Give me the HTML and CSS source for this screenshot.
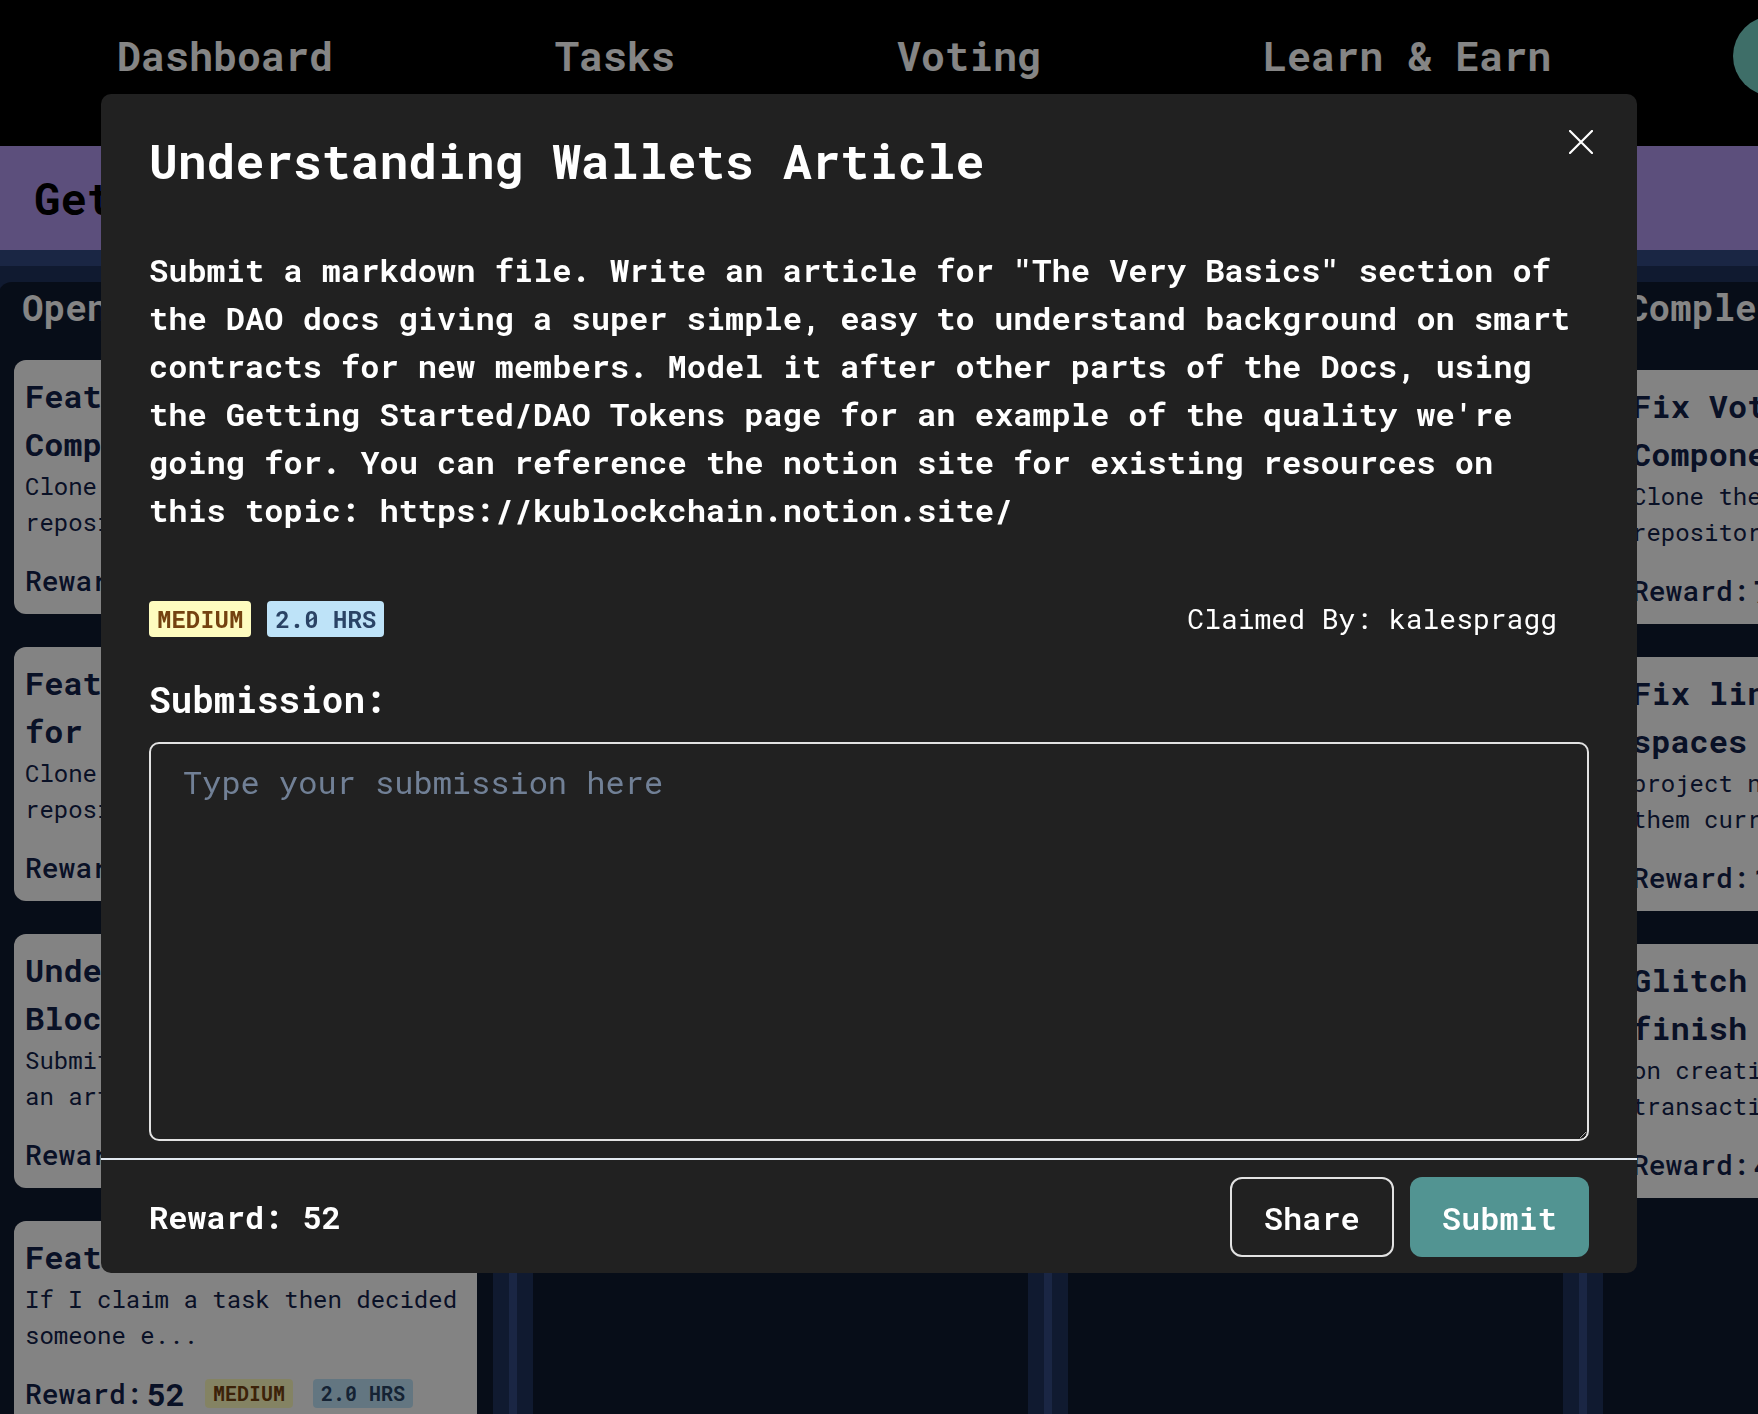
FILE: index.html
```html
<!DOCTYPE html>
<html lang="en">
<head>
<meta charset="utf-8">
<title>Tasks</title>
<link rel="stylesheet" href="styles.css">
</head>
<body>
<header class="topnav">
  <ul class="nav-links">
    <li>Dashboard</li>
    <li>Tasks</li>
    <li>Voting</li>
    <li>Learn &amp; Earn</li>
  </ul>
  <div class="avatar"></div>
</header>

<section class="banner">
  <h1>Get Involved</h1>
</section>

<main class="board">
  <section class="column">
    <div class="column-inner">
      <h2>Open</h2>
      <div class="cards">
        <article class="card">
          <h3 class="card-title">Feature: Proposal Component</h3>
          <p class="card-desc">Clone the DAO dashboard repository and c...</p>
          <div class="card-meta"><span class="reward-label">Reward:</span><span class="reward-value">60</span><span class="badge badge-yellow badge-sm">MEDIUM</span><span class="badge badge-blue badge-sm">3.0 HRS</span></div>
        </article>
        <article class="card">
          <h3 class="card-title">Feature: Add Dark Mode for Tasks</h3>
          <p class="card-desc">Clone the DAO frontend repository and ad...</p>
          <div class="card-meta"><span class="reward-label">Reward:</span><span class="reward-value">40</span><span class="badge badge-yellow badge-sm">MEDIUM</span><span class="badge badge-blue badge-sm">2.0 HRS</span></div>
        </article>
        <article class="card">
          <h3 class="card-title">Understanding Blockchain Article</h3>
          <p class="card-desc">Submit a markdown file. Write an article...</p>
          <div class="card-meta"><span class="reward-label">Reward:</span><span class="reward-value">52</span><span class="badge badge-yellow badge-sm">MEDIUM</span><span class="badge badge-blue badge-sm">2.0 HRS</span></div>
        </article>
        <article class="card">
          <h3 class="card-title">Feature: Unclaim Task</h3>
          <p class="card-desc">If I claim a task then decided someone e...</p>
          <div class="card-meta"><span class="reward-label">Reward:</span><span class="reward-value">52</span><span class="badge badge-yellow badge-sm">MEDIUM</span><span class="badge badge-blue badge-sm">2.0 HRS</span></div>
        </article>
      </div>
    </div>
  </section>

  <section class="column">
    <div class="column-inner">
      <h2>In Progress</h2>
      <div class="cards">
        <article class="card">
          <h3 class="card-title">Understanding Wallets Article</h3>
          <p class="card-desc">Submit a markdown file. Write an article...</p>
          <div class="card-meta"><span class="reward-label">Reward:</span><span class="reward-value">52</span><span class="badge badge-yellow badge-sm">MEDIUM</span><span class="badge badge-blue badge-sm">2.0 HRS</span></div>
        </article>
        <article class="card">
          <h3 class="card-title">Fix Task Modal Scrolling</h3>
          <p class="card-desc">Long task descriptions overflow the moda...</p>
          <div class="card-meta"><span class="reward-label">Reward:</span><span class="reward-value">20</span><span class="badge badge-yellow badge-sm">MEDIUM</span><span class="badge badge-blue badge-sm">1.0 HRS</span></div>
        </article>
      </div>
    </div>
  </section>

  <section class="column">
    <div class="column-inner">
      <h2>In Review</h2>
      <div class="cards">
        <article class="card">
          <h3 class="card-title">Feature: Voting Results Chart</h3>
          <p class="card-desc">Clone the DAO dashboard repository and a...</p>
          <div class="card-meta"><span class="reward-label">Reward:</span><span class="reward-value">64</span><span class="badge badge-yellow badge-sm">MEDIUM</span><span class="badge badge-blue badge-sm">4.0 HRS</span></div>
        </article>
      </div>
    </div>
  </section>

  <section class="column column-done">
    <div class="column-inner">
      <h2>Completed</h2>
      <div class="cards">
        <article class="card">
          <h3 class="card-title">Fix Voting Proposal Component</h3>
          <p class="card-desc">Clone the DAO voting repository and fix...</p>
          <div class="card-meta"><span class="reward-label">Reward:</span><span class="reward-value">75</span><span class="badge badge-yellow badge-sm">MEDIUM</span><span class="badge badge-blue badge-sm">3.0 HRS</span></div>
        </article>
        <article class="card">
          <h3 class="card-title">Fix line breaks and spaces in descriptions</h3>
          <p class="card-desc">project names with spaces make them curr...</p>
          <div class="card-meta"><span class="reward-label">Reward:</span><span class="reward-value">15</span><span class="badge badge-yellow badge-sm">EASY</span><span class="badge badge-blue badge-sm">1.0 HRS</span></div>
        </article>
        <article class="card">
          <h3 class="card-title">Glitch when tasks finish loading</h3>
          <p class="card-desc">on creating a new task the transaction s...</p>
          <div class="card-meta"><span class="reward-label">Reward:</span><span class="reward-value">40</span><span class="badge badge-yellow badge-sm">MEDIUM</span><span class="badge badge-blue badge-sm">2.0 HRS</span></div>
        </article>
      </div>
    </div>
  </section>
</main>

<div class="overlay"></div>

<div class="modal-layer">
  <div class="modal" role="dialog" aria-labelledby="modal-title">
    <h2 class="modal-header" id="modal-title">Understanding Wallets Article</h2>
    <button class="close-btn" aria-label="Close">
      <svg width="24" height="24" viewBox="0 0 24 24" aria-hidden="true">
        <path d="M1 1 L23 23 M23 1 L1 23" stroke="#ffffff" stroke-width="2.2" stroke-linecap="round" fill="none"/>
      </svg>
    </button>
    <div class="modal-body">
      <p class="modal-desc">Submit a markdown file. Write an article for "The Very Basics" section of the DAO docs giving a super simple, easy to understand background on smart contracts for new members. Model it after other parts of the Docs, using the Getting Started/DAO Tokens page for an example of the quality we're going for. You can reference the notion site for existing resources on this topic: https://kublockchain.notion.site/</p>
      <div class="meta-row">
        <span class="badge badge-yellow">MEDIUM</span>
        <span class="badge badge-blue">2.0 HRS</span>
        <span class="claimed">Claimed By: kalespragg</span>
      </div>
      <label class="submission-label" for="submission">Submission:</label>
      <textarea class="submission" id="submission" placeholder="Type your submission here"></textarea>
    </div>
    <div class="modal-footer">
      <p class="footer-reward">Reward: 52</p>
      <button class="btn btn-outline">Share</button>
      <button class="btn btn-primary">Submit</button>
    </div>
  </div>
</div>
</body>
</html>
```

FILE: styles.css
```css
* {
  box-sizing: border-box;
}

body {
  margin: 0;
  height: 1414px;
  overflow: hidden;
  background: #000;
  font-family: "Roboto Mono", "DejaVu Sans Mono", "Liberation Mono", monospace;
}

/* ---------- top navigation ---------- */
.topnav {
  height: 112px;
  margin-bottom: 34px;
  display: flex;
  align-items: center;
  padding-left: 117px;
}

.nav-links {
  flex: none;
  display: flex;
  gap: 222px;
  margin: 0;
  padding: 0;
  list-style: none;
  font-size: 40px;
  line-height: 60px;
  font-weight: 700;
  color: #ffffff;
}

.avatar {
  flex: none;
  width: 80px;
  height: 80px;
  margin-left: 182px;
  border-radius: 50%;
  background: #77d3c8;
}

/* ---------- banner ---------- */
.banner {
  height: 104px;
  display: flex;
  align-items: center;
  padding-left: 34px;
  background: #b198ee;
}

.banner h1 {
  margin: 0;
  font-size: 44px;
  font-weight: 700;
  color: #000;
}

/* ---------- board ---------- */
.board {
  display: flex;
  gap: 8px;
  margin-left: -18px;
  padding-top: 16px;
  min-height: 1164px;
  background: #324983;
}

.column {
  flex: none;
  width: 527px;
  padding: 16px 16px 0;
  border-radius: 18px 18px 0 0;
  background: #1f325c;
}

.column-inner {
  min-height: 1200px;
  padding: 3px 16px 16px;
  border-radius: 14px 14px 0 0;
  background: #0f192e;
}

.column h2 {
  margin: 0 0 31px;
  padding-left: 8px;
  font-size: 36px;
  line-height: 44px;
  font-weight: 700;
  color: #ffffff;
}

.column-done h2 {
  margin-bottom: 41px;
}

.cards {
  display: flex;
  flex-direction: column;
  gap: 33px;
}

.column-done .card {
  padding-left: 13px;
}

.card {
  padding: 12px 11px 10px;
  border-radius: 12px;
  background: #fcfcfc;
  color: #13214a;
}

.card-title {
  margin: 0;
  font-size: 32px;
  line-height: 48px;
  font-weight: 700;
}

.card-desc {
  margin: 0;
  font-size: 24px;
  line-height: 36px;
}

.card-meta {
  display: flex;
  align-items: center;
  height: 48px;
  margin-top: 16px;
  white-space: nowrap;
}

.reward-label {
  font-size: 28px;
  font-weight: 500;
}

.reward-value {
  margin-left: 4px;
  margin-right: 20px;
  font-size: 32px;
  font-weight: 700;
}

/* ---------- badges ---------- */
.badge {
  display: inline-block;
  padding: 0 8px;
  border-radius: 4px;
  font-size: 24px;
  line-height: 36px;
  font-weight: 700;
  text-transform: uppercase;
}

.badge-sm {
  font-size: 20px;
  line-height: 29px;
  margin-right: 20px;
}

.badge-yellow {
  background: #fefcbf;
  color: #744210;
}

.badge-blue {
  background: #bee3f8;
  color: #2a4365;
}

/* ---------- overlay + modal ---------- */
.overlay {
  position: fixed;
  inset: 0;
  background: rgba(0, 0, 0, 0.48);
}

.modal-layer {
  position: fixed;
  inset: 0;
  display: flex;
  justify-content: center;
  align-items: flex-start;
  padding: 94px 20px 0 0;
}

.modal {
  position: relative;
  width: 1536px;
  border-radius: 10px;
  background: #212121;
  color: #ffffff;
}

.modal-header {
  margin: 0;
  padding: 35px 48px 0;
  font-size: 48px;
  line-height: 64px;
  font-weight: 700;
}

.close-btn {
  position: absolute;
  top: 16px;
  right: 24px;
  width: 64px;
  height: 64px;
  padding: 0;
  border: 0;
  background: none;
  display: flex;
  align-items: center;
  justify-content: center;
  cursor: pointer;
}

.modal-body {
  padding: 53px 48px 17px;
}

.modal-desc {
  margin: 0;
  font-size: 32px;
  line-height: 48px;
  font-weight: 700;
}

.meta-row {
  display: flex;
  align-items: center;
  gap: 16px;
  height: 36px;
  margin-top: 67px;
}

.claimed {
  margin-left: auto;
  margin-right: 32px;
  font-size: 28px;
  line-height: 36px;
}

.submission-label {
  display: block;
  margin-top: 35px;
  font-size: 36px;
  line-height: 54px;
  font-weight: 700;
}

.submission {
  display: block;
  width: 100%;
  height: 399px;
  margin-top: 16px;
  padding: 14px 32px;
  border: 2px solid #e2e2e2;
  border-radius: 10px;
  background: transparent;
  color: #ffffff;
  font-family: inherit;
  font-size: 32px;
  line-height: 48px;
  resize: vertical;
  outline: none;
}

.submission::placeholder {
  color: #718096;
}

.modal-footer {
  display: flex;
  align-items: center;
  padding: 17px 48px 16px;
  border-top: 2px solid #e2e8f0;
}

.footer-reward {
  margin: 0;
  font-size: 32px;
  line-height: 48px;
  font-weight: 700;
}

.btn {
  height: 80px;
  padding: 0 32px;
  border-radius: 12px;
  font-family: inherit;
  font-size: 32px;
  font-weight: 600;
  color: #ffffff;
  cursor: pointer;
}

.btn-outline {
  margin-left: auto;
  border: 2px solid #e2e2e2;
  background: transparent;
}

.btn-primary {
  margin-left: 16px;
  border: 0;
  background: #529492;
}
```
